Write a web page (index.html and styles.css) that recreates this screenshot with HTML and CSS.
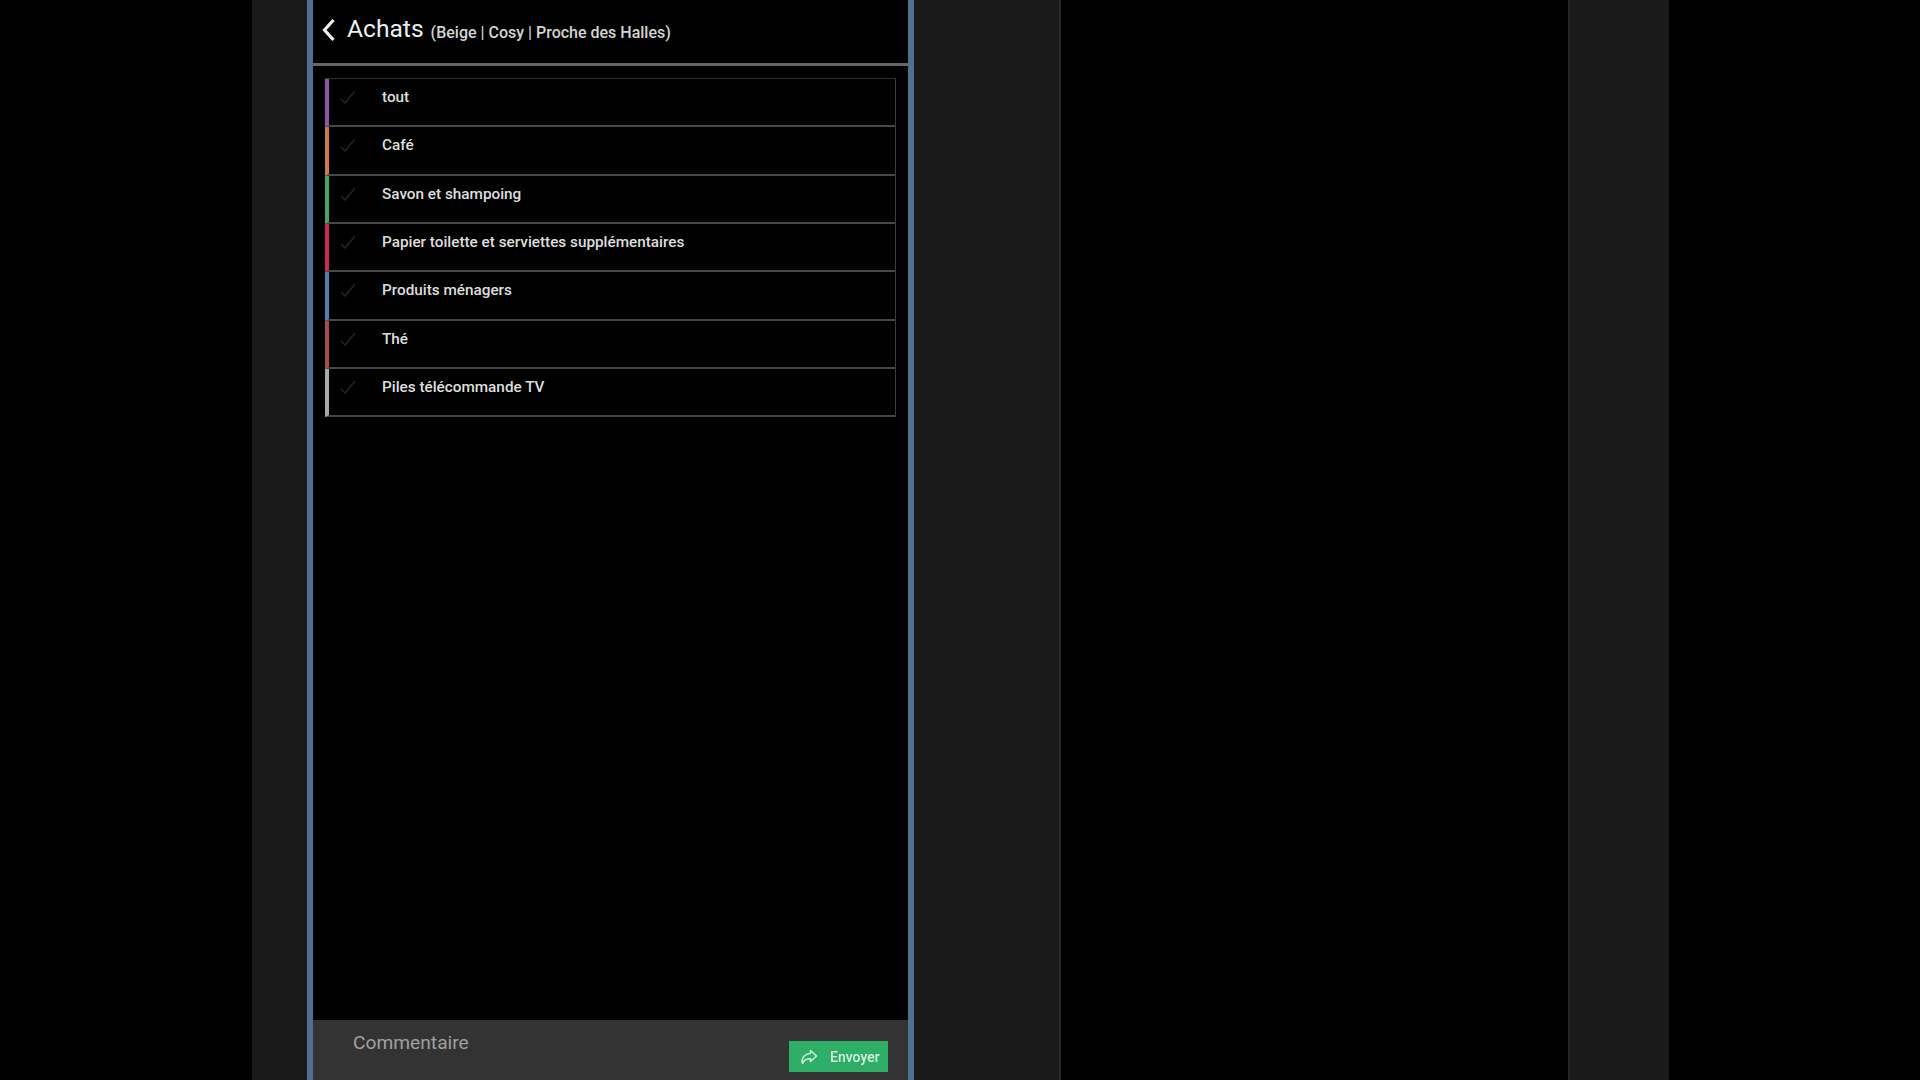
FILE: index.html
```html
<!DOCTYPE html>
<html lang="fr">
<head>
<meta charset="utf-8">
<title>Achats</title>
<link rel="stylesheet" href="styles.css">
</head>
<body>
<div class="stage">
  <div class="side side-left"></div>
  <main class="phone">
    <header class="head">
      <svg class="back" viewBox="0 0 14 24" width="14" height="24"><path d="M11.5 2 2.5 12l9 10" fill="none" stroke="#eee" stroke-width="3.2"/></svg>
      <h1 class="title">Achats</h1>
      <span class="sub">(Beige | Cosy | Proche des Halles)</span>
    </header>
    <ul class="list">
      <li class="row c-purple"><svg class="check" viewBox="0 0 16 14" width="16" height="14"><path d="M1 9l4 4L15 1" fill="none" stroke="#262626" stroke-width="1.4"/></svg><span class="label">tout</span></li>
      <li class="row c-orange"><svg class="check" viewBox="0 0 16 14" width="16" height="14"><path d="M1 9l4 4L15 1" fill="none" stroke="#262626" stroke-width="1.4"/></svg><span class="label">Café</span></li>
      <li class="row c-green"><svg class="check" viewBox="0 0 16 14" width="16" height="14"><path d="M1 9l4 4L15 1" fill="none" stroke="#262626" stroke-width="1.4"/></svg><span class="label">Savon et shampoing</span></li>
      <li class="row c-red"><svg class="check" viewBox="0 0 16 14" width="16" height="14"><path d="M1 9l4 4L15 1" fill="none" stroke="#262626" stroke-width="1.4"/></svg><span class="label">Papier toilette et serviettes supplémentaires</span></li>
      <li class="row c-blue"><svg class="check" viewBox="0 0 16 14" width="16" height="14"><path d="M1 9l4 4L15 1" fill="none" stroke="#262626" stroke-width="1.4"/></svg><span class="label">Produits ménagers</span></li>
      <li class="row c-brick"><svg class="check" viewBox="0 0 16 14" width="16" height="14"><path d="M1 9l4 4L15 1" fill="none" stroke="#262626" stroke-width="1.4"/></svg><span class="label">Thé</span></li>
      <li class="row c-gray"><svg class="check" viewBox="0 0 16 14" width="16" height="14"><path d="M1 9l4 4L15 1" fill="none" stroke="#262626" stroke-width="1.4"/></svg><span class="label">Piles télécommande TV</span></li>
    </ul>
    <footer class="foot">
      <span class="comment">Commentaire</span>
      <button class="send" type="button">
        <svg class="send-icon" viewBox="0 0 18 16" width="18" height="16"><path d="M10.5 1.5 16.5 7l-6 5.5V9.8C6.5 9.6 4 11 2.5 14.5 1 10.5 3.5 5 10.5 4.4Z" fill="none" stroke="#c9efd7" stroke-width="1.5" stroke-linejoin="round"/></svg>
        <span>Envoyer</span>
      </button>
    </footer>
  </main>
  <div class="side side-mid"></div>
  <div class="gap"></div>
  <div class="side side-right"></div>
</div>
</body>
</html>
```

FILE: styles.css
```css
* { box-sizing: border-box; }
html, body { margin: 0; height: 100%; background: #000; overflow: hidden; }
body { font-family: Roboto, "Liberation Sans", sans-serif; color: #e6e6e6; }

.stage {
  display: flex;
  width: 1920px;
  height: 1080px;
  padding-left: 252px;
  filter: blur(0.6px);
}

.side { background: #1a1a1a; height: 100%; }
.side-left { width: 55px; }
.side-mid { width: 147px; border-right: 2px solid #282828; }
.side-right { width: 101px; border-left: 2px solid #242424; }
.gap { width: 507px; }

.phone {
  width: 607px;
  height: 100%;
  display: flex;
  flex-direction: column;
  background: #000;
  border-left: 6px solid #50708f;
  border-right: 6px solid #50708f;
}

.head {
  height: 66px;
  flex: none;
  display: flex;
  align-items: baseline;
  padding: 14px 0 0 9px;
  border-bottom: 3px solid #666;
}
.back { align-self: flex-start; margin: 4px 11px 0 0; }
.title { margin: 0; font-size: 24.6px; font-weight: 400; color: #eee; line-height: 30px; }
.sub { margin-left: 7px; font-size: 16px; font-weight: 500; color: #d4d4d4; position: relative; top: 1px; }

.list {
  list-style: none;
  margin: 12px 12px 0 12px;
  padding: 0;
  border-top: 1px solid #2c2c2c;
  border-right: 1px solid #3a3a3a;
}
.row {
  height: 48.35px;
  display: flex;
  align-items: flex-start;
  padding: 8px 0 0 11px;
  border-left: 4px solid #888;
  border-bottom: 2px solid #474747;
}
.check { flex: none; margin: 3px 26px 0 0; }
.label { font-size: 15.3px; font-weight: 500; line-height: 20px; color: #dedede; }

.c-purple { border-left-color: #8a55a8; }
.c-orange { border-left-color: #cf7746; }
.c-green { border-left-color: #3fa869; }
.c-red { border-left-color: #cc2a55; }
.c-blue { border-left-color: #4a82ab; }
.c-brick { border-left-color: #a84a4c; }
.c-gray { border-left-color: #a9a9a9; }

.foot {
  margin-top: auto;
  height: 60px;
  flex: none;
  display: flex;
  justify-content: space-between;
  align-items: flex-start;
  padding: 10px 20px 0 40px;
  background: #333;
}
.comment { font-size: 19.2px; line-height: 26px; color: #a0a0a0; }
.send {
  width: 99px;
  height: 31px;
  margin-top: 11px;
  display: flex;
  align-items: center;
  gap: 12px;
  padding: 0 0 0 11px;
  border: none;
  background: #2eae67;
  color: #d6f3e0;
  font-family: Roboto, "Liberation Sans", sans-serif;
  font-size: 14px;
  font-weight: 500;
}
.send-icon { flex: none; }
```
